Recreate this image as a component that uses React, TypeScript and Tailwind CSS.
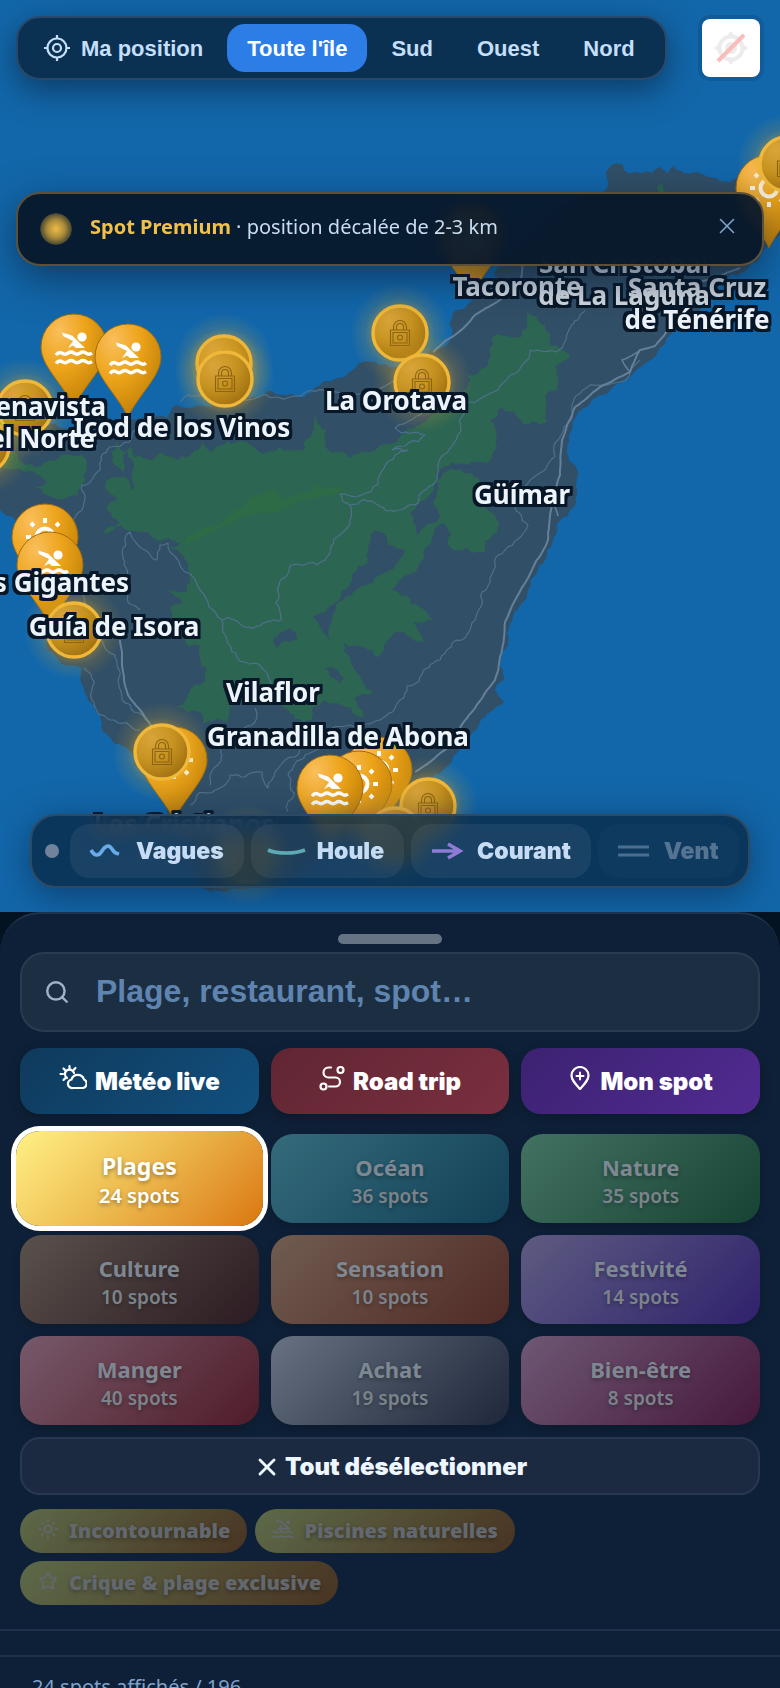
import type { ReactNode } from "react";
import { Plus, Search, Star, Sun, X } from "lucide-react";

type Point = [number, number];

/** Splits every segment again and again with a small repeatable offset, for coasts and roads. */
function rough(points: Point[], closed: boolean, amount: number): string {
  let seed = 7;
  const random = () => {
    seed = (seed * 16807) % 2147483647;
    return seed / 2147483647 - 0.5;
  };
  let list = closed ? [...points, points[0]] : points;
  for (let pass = 0; pass < 3; pass++) {
    const next: Point[] = [list[0]];
    for (let i = 1; i < list.length; i++) {
      const [ax, ay] = list[i - 1];
      const [bx, by] = list[i];
      const dx = bx - ax;
      const dy = by - ay;
      const shift = random() * amount;
      if (Math.hypot(dx, dy) > 5) next.push([(ax + bx) / 2 - dy * shift, (ay + by) / 2 + dx * shift]);
      next.push([bx, by]);
    }
    list = next;
  }
  return "M" + list.map(([x, y]) => `${x.toFixed(1)} ${y.toFixed(1)}`).join("L") + (closed ? "Z" : "");
}

const ISLAND: Point[] = [
  [-30, 430], [0, 428], [40, 424], [70, 428], [97, 417], [133, 420], [167, 418], [176, 405], [200, 406], [225, 400], [243, 400], [267, 391], [285, 395],
  [310, 393], [322, 383], [333, 380], [348, 373], [358, 364], [378, 364], [400, 367], [433, 350], [452, 337], [450, 322], [470, 303],
  [486, 290], [497, 267], [520, 240], [560, 205], [590, 192], [605, 191], [606, 173], [613, 164], [622, 164], [628, 173], [640, 173], [652, 173], [660, 167],
  [668, 173], [674, 165], [684, 173], [700, 173], [715, 178], [735, 179], [760, 175], [790, 170], [790, 225], [763, 250],
  [757, 262], [730, 275], [700, 310], [670, 335], [643, 365], [613, 387], [587, 407], [572, 430], [567, 453], [577, 480], [575, 505],
  [557, 525], [547, 550], [530, 580], [522, 603], [513, 617], [507, 633], [508, 645], [501, 660], [504, 680], [495, 690], [504, 702],
  [490, 712], [480, 722], [463, 747], [447, 767], [430, 785], [405, 805], [385, 830], [340, 845], [300, 870], [230, 889], [204, 889],
  [190, 850], [167, 813], [145, 773], [130, 752], [115, 744], [100, 715], [84, 690], [82, 668], [47, 650], [35, 600], [20, 560], [13, 517], [0, 510], [-30, 500],
];

const FORESTS: Point[][] = [
  [
    [116, 442], [112, 453], [117, 466], [123, 473], [128, 450], [131, 442], [134, 458], [140, 455], [150, 460], [160, 452], [178, 460], [200, 448], [203, 440], [212, 452], [220, 445], [250, 445],
    [290, 450], [305, 448], [312, 434], [313, 412], [320, 426], [326, 430], [331, 452], [350, 458], [380, 445], [407, 430], [430, 417], [446, 405], [460, 397], [467, 373], [488, 363],
    [493, 337], [520, 338], [527, 313], [545, 325], [550, 345], [570, 355], [555, 367], [558, 390], [545, 397], [547, 423], [523, 425],
    [500, 407], [490, 420], [497, 447], [487, 463], [450, 467], [470, 473], [484, 490], [495, 515], [497, 533], [485, 540], [483, 553], [450, 547],
    [443, 523], [425, 548], [403, 577], [390, 590], [420, 607], [433, 620], [413, 623], [423, 643], [398, 632], [387, 640], [378, 658],
    [363, 647], [343, 643], [350, 658], [357, 673], [373, 692], [353, 697], [363, 717], [337, 703], [313, 707], [312, 720], [303, 722], [290, 713], [277, 703], [250, 693], [230, 707],
    [227, 723], [203, 723], [200, 712], [177, 707], [190, 690], [203, 683], [207, 670], [200, 647], [180, 637], [197, 630], [173, 620], [170, 610], [183, 602], [167, 590],
    [187, 592], [190, 580], [168, 548], [180, 543], [157, 540], [140, 532], [103, 533], [120, 523], [107, 510], [117, 500], [105, 485], [120, 477], [133, 490], [132, 476], [134, 468],
  ],
  [[0, 450], [25, 465], [50, 460], [82, 455], [85, 480], [78, 497], [55, 498], [35, 487], [47, 482], [25, 472], [0, 468]],
  [[657, 188], [662, 184], [667, 192], [660, 193]],
];

const CLEARINGS: Point[][] = [
  [[373, 532], [380, 532], [405, 550], [398, 562], [390, 570], [373, 583], [358, 588], [343, 600], [332, 617], [330, 640], [322, 630], [313, 617], [328, 608], [343, 590], [367, 563]],
  [[437, 470], [470, 467], [437, 481], [433, 503], [440, 517], [418, 535], [410, 513], [425, 500], [434, 485]],
  [[290, 628], [297, 640], [277, 648], [273, 640]],
  [[325, 668], [345, 678], [340, 684]],
];

const RIDGE: Point[] = [[182, 548], [200, 530], [235, 510], [272, 488], [282, 500], [318, 484], [345, 490], [316, 498], [280, 512], [230, 525], [196, 540]];

const ROADS: Point[][] = [
  [[140, 425], [110, 447], [100, 470], [82, 485], [82, 510], [72, 540], [75, 580], [85, 600], [95, 620], [115, 655], [120, 675], [122, 700], [150, 722]],
  [[140, 610], [125, 590], [124, 565], [125, 538], [130, 532], [134, 540], [157, 560], [160, 545], [168, 543], [170, 552], [200, 590], [222, 620], [225, 635], [245, 662], [262, 668], [272, 685]],
  [[222, 620], [235, 620], [260, 626], [281, 620], [279, 585], [290, 566], [325, 560], [340, 535], [350, 520], [350, 505]],
  [[350, 505], [340, 494], [378, 484], [395, 455], [408, 450], [392, 450], [425, 435], [395, 428], [425, 405], [440, 395]],
  [[350, 505], [378, 505], [400, 510], [415, 505], [432, 485], [438, 465], [456, 440], [468, 402], [510, 375], [530, 350], [556, 352], [572, 325], [585, 310]],
  [[640, 360], [600, 385], [572, 405], [558, 440], [545, 470], [515, 505], [528, 525], [505, 550], [490, 578], [480, 608], [465, 638], [440, 660], [420, 677], [400, 700], [380, 720], [350, 725], [305, 755], [288, 775], [288, 812]],
  [[190, 805], [215, 790], [230, 775], [245, 777], [262, 772], [268, 788], [275, 772], [300, 750]],
  [[84, 668], [92, 700], [110, 720], [140, 730]],
  [[255, 708], [252, 725], [240, 735]],
  [[218, 745], [218, 765], [210, 785]],
  [[180, 402], [200, 395], [240, 400], [290, 397], [330, 393], [370, 390], [410, 375]],
];

const MOTORWAYS: Point[][] = [
  [[433, 352], [455, 335], [475, 315], [497, 302], [520, 285], [523, 262]],
  [[740, 268], [690, 285], [672, 325], [655, 346], [640, 350], [630, 372], [600, 387], [575, 407], [562, 440], [560, 475], [551, 510], [548, 540], [525, 583], [505, 622], [502, 650], [495, 680], [475, 708], [460, 728], [447, 748], [430, 762], [415, 772]],
  [[120, 640], [122, 665], [128, 695], [150, 724], [165, 745]],
];

const PALE_PATHS: Point[][] = [[[640, 350], [622, 360], [630, 372]], [[552, 502], [558, 516]]];

const LABELS: { text: string; x: number; y: number; anchor?: "end"; dim?: boolean }[] = [
  { text: "Tacoronte", x: 517, y: 296, dim: true },
  { text: "San Cristobal", x: 624, y: 273, dim: true },
  { text: "de La Laguna", x: 624, y: 305, dim: true },
  { text: "Santa Cruz", x: 697, y: 297, dim: true },
  { text: "de Ténérife", x: 697, y: 329 },
  { text: "La Orotava", x: 396, y: 410 },
  { text: "Icod de los Vinos", x: 182, y: 437 },
  { text: "Buenavista", x: 106, y: 416, anchor: "end" },
  { text: "del Norte", x: 95, y: 448, anchor: "end" },
  { text: "Los Gigantes", x: 129, y: 592, anchor: "end" },
  { text: "Guía de Isora", x: 114, y: 636 },
  { text: "Vilaflor", x: 273, y: 702 },
  { text: "Granadilla de Abona", x: 338, y: 746 },
  { text: "Los Cristianos", x: 184, y: 834 },
  { text: "Güímar", x: 522, y: 504 },
];

type MarkerProps = { kind: "swim" | "sun" | "lock"; x: number; y: number };

const MARKERS: MarkerProps[] = [
  { kind: "lock", x: -18, y: 446 },
  { kind: "lock", x: 25, y: 408 },
  { kind: "swim", x: 74, y: 347 },
  { kind: "swim", x: 128, y: 357 },
  { kind: "lock", x: 224, y: 363 },
  { kind: "lock", x: 225, y: 379 },
  { kind: "lock", x: 400, y: 333 },
  { kind: "lock", x: 422, y: 382 },
  { kind: "swim", x: 471, y: 236 },
  { kind: "sun", x: 769, y: 188 },
  { kind: "lock", x: 787, y: 164 },
  { kind: "sun", x: 45, y: 537 },
  { kind: "swim", x: 50, y: 565 },
  { kind: "lock", x: 74, y: 630 },
  { kind: "sun", x: 174, y: 760 },
  { kind: "lock", x: 162, y: 752 },
  { kind: "sun", x: 379, y: 770 },
  { kind: "sun", x: 359, y: 784 },
  { kind: "swim", x: 330, y: 788 },
  { kind: "lock", x: 428, y: 806 },
  { kind: "lock", x: 395, y: 835 },
  { kind: "lock", x: 247, y: 855 },
];

function Marker({ kind, x, y }: MarkerProps) {
  if (kind === "lock") {
    return (
      <g transform={`translate(${x} ${y})`}>
        <circle r="50" fill="url(#halo)" />
        <circle r="27" fill="url(#coin)" stroke="#efb83a" strokeWidth="3.4" />
        <g fill="none" stroke="#8c6413" strokeWidth="1.1">
          <path d="M-9.5 -3h19v15.500h-19zM-7 -.5h14v10.500h-14z" />
          <path d="M-6.5 -3v-3a6.500 6.500 0 0 1 13 0v3M-3.500 -3v-3a3.500 3.500 0 0 1 7 0v3" />
          <circle cy="4.5" r="2.5" />
        </g>
      </g>
    );
  }
  return (
    <g transform={`translate(${x} ${y})`}>
      <path
        d="M-33 0A33 33 0 1 1 33 0C33 19 12 36 0 60C-12 36 -33 19 -33 0Z"
        fill="url(#pin)"
        stroke="#a06c10"
        strokeWidth="1"
      />
      {kind === "swim" ? (
        <g>
          <path d="M-12 -14.5L-2 -11.500L11 1L2 1L-1 -1.500L-6 1L-1 -6L-11 -11Z" fill="#fff" />
          <circle cx="8" cy="-10" r="4.6" fill="#fff" />
          <path
            d="M-18 8q3 -4 6 -1.800t6 0t6 0t6 0t6 0t6 0M-18 16.500q3 -4 6 -1.800t6 0t6 0t6 0t6 0t6 0"
            fill="none"
            stroke="#fff"
            strokeWidth="3.4"
          />
        </g>
      ) : (
        <g stroke="#fff" strokeWidth="4" fill="none">
          <circle r="8.5" />
          <path d="M0 -19v5M0 14v5M-19 0h5M14 0h5M-14 -14l3 3M11 11l3 3M-14 14l3 -3M11 -11l3 -3" />
        </g>
      )}
    </g>
  );
}

function IslandMap() {
  return (
    <svg
      className="absolute inset-0 h-full w-full"
      viewBox="0 0 780 912"
      preserveAspectRatio="xMidYMid slice"
      role="img"
      aria-label="Carte de Tenerife"
    >
      <defs>
        <radialGradient id="pin" cx="0.28" cy="0.18" r="0.9">
          <stop offset="0" stopColor="#fabf5c" />
          <stop offset="0.45" stopColor="#eda41a" />
          <stop offset="1" stopColor="#bc7c04" />
        </radialGradient>
        <radialGradient id="coin" cx="0.3" cy="0.25" r="0.85">
          <stop offset="0" stopColor="#d9a53a" />
          <stop offset="0.5" stopColor="#c6921f" />
          <stop offset="1" stopColor="#9c6d10" />
        </radialGradient>
        <radialGradient id="halo">
          <stop offset="0.5" stopColor="#e0a829" stopOpacity="0.42" />
          <stop offset="0.7" stopColor="#e0a829" stopOpacity="0.16" />
          <stop offset="1" stopColor="#e0a829" stopOpacity="0" />
        </radialGradient>
        <filter id="outline" x="-5%" y="-5%" width="110%" height="110%" colorInterpolationFilters="sRGB">
          <feMorphology in="SourceAlpha" operator="dilate" radius="3" result="thick" />
          <feFlood floodColor="#071727" />
          <feComposite in2="thick" operator="in" result="edge" />
          <feMerge>
            <feMergeNode in="edge" />
            <feMergeNode in="SourceGraphic" />
          </feMerge>
        </filter>
      </defs>
      <rect width="780" height="912" fill="#1267aa" />
      <path d={rough(ISLAND, true, 0.35)} fill="#314f66" />
      {FORESTS.map((area, i) => (
        <path key={i} d={rough(area, true, 0.45)} fill="#2d6553" />
      ))}
      {CLEARINGS.map((area, i) => (
        <path key={i} d={rough(area, true, 0.4)} fill="#314f66" />
      ))}
      <path d={rough(RIDGE, true, 0.3)} fill="#2c6b46" />
      <g fill="none" strokeLinejoin="round">
        {ROADS.map((road, i) => (
          <path key={i} d={rough(road, false, 0.4)} stroke="#4f708a" strokeWidth="1.2" />
        ))}
        {MOTORWAYS.map((road, i) => (
          <path key={i} d={rough(road, false, 0.08)} stroke="#66809a" strokeWidth="2" />
        ))}
        {PALE_PATHS.map((road, i) => (
          <path key={i} d={rough(road, false, 0.1)} stroke="#66809a" strokeWidth="1.5" />
        ))}
      </g>
      {MARKERS.map((marker, i) => (
        <Marker key={i} {...marker} />
      ))}
      <g className="font-['Noto_Sans',sans-serif] text-[26px] font-bold" filter="url(#outline)">
        {LABELS.map((label) => (
          <text key={label.text} x={label.x} y={label.y} textAnchor={label.anchor ?? "middle"} fill={label.dim ? "#d3dae2" : "#edf4fc"}>
            {label.text}
          </text>
        ))}
      </g>
    </svg>
  );
}

function TargetIcon() {
  return (
    <svg className="size-[26px]" viewBox="0 0 26 26" fill="none" stroke="currentColor" strokeWidth="2.2" aria-hidden="true">
      <circle cx="13" cy="13" r="9.5" />
      <circle cx="13" cy="13" r="4" />
      <path d="M13 0v4M13 22v4M0 13h4M22 13h4" />
    </svg>
  );
}

function LocateOffIcon() {
  return (
    <svg className="size-[36px]" viewBox="0 0 36 36" fill="none" aria-hidden="true">
      <circle cx="18" cy="18" r="11.5" stroke="#ececec" strokeWidth="4" />
      <circle cx="18" cy="18" r="6" fill="#ececec" />
      <path d="M18 1l4 5h-8zM18 35l4 -5h-8zM1 18l5 -4v8zM35 18l-5 -4v8z" fill="#ececec" />
      <path d="M5 31L31 5" stroke="#fbbcbc" strokeWidth="4" />
    </svg>
  );
}

const REGIONS = ["Toute l'île", "Sud", "Ouest", "Nord"];

function TopBar() {
  return (
    <header className="relative flex items-center justify-between pt-4 pr-5 pl-4">
      <nav className="flex h-16 items-center gap-1 rounded-[24px] border-2 border-[#29486a] bg-[#0b3152] pr-2.5 pl-1.5 font-['Liberation_Sans',Arial,sans-serif] text-[22px] font-bold text-[#c5dffa] shadow-[0_10px_32px_rgba(10,30,55,0.6)]">
        <button className="flex h-12 items-center gap-[11px] rounded-[18px] px-5">
          <TargetIcon />
          Ma position
        </button>
        {REGIONS.map((region, i) => (
          <button
            key={region}
            aria-pressed={i === 0}
            className={i === 0 ? "h-12 rounded-[18px] bg-[#2d7de6] px-5 text-white" : "h-12 rounded-[18px] px-5"}
          >
            {region}
          </button>
        ))}
      </nav>
      <button
        aria-label="Géolocalisation indisponible"
        className="flex size-[58px] items-center justify-center rounded-lg bg-white shadow-[0_0_0_4px_rgba(10,40,80,0.18)]"
      >
        <LocateOffIcon />
      </button>
    </header>
  );
}

function PremiumNotice() {
  return (
    <div
      role="status"
      className="relative mx-4 mt-28 flex h-[74px] items-center rounded-[24px] border-2 border-[#5c5138] bg-[#07172a]/95 px-[22px] font-['Noto_Sans',sans-serif] text-[20px] text-[#c9dcf0] shadow-[0_12px_40px_rgba(10,30,55,0.6)] backdrop-blur-[6px]"
    >
      <span className="size-8 rounded-full bg-[radial-gradient(circle,#ecbb46_0%,#a98a3b_40%,#4c4a32_68%,transparent_72%)]" />
      <p className="ml-[18px] flex-1 pb-1">
        <strong className="font-bold text-[#f1c04a]">Spot Premium</strong> · position décalée de 2-3 km
      </p>
      <button aria-label="Fermer" className="pb-1.5 text-[#7fa5cd]">
        <X size={26} strokeWidth={1.5} />
      </button>
    </div>
  );
}

const LAYERS: { name: string; icon: ReactNode; off?: boolean }[] = [
  { name: "Vagues", icon: <path d="M1 10c4 7 8 6 11 1s7-7 10-2 4 4 7 5" stroke="#68abe8" strokeWidth="3.6" /> },
  { name: "Houle", icon: <path d="M-3 10C6 14 24 14 34 10" stroke="#5eaab4" strokeWidth="3.6" /> },
  { name: "Courant", icon: <path d="M1 11h27M17 4l12 7-12 7" stroke="#8f7ad8" strokeWidth="3.6" /> },
  { name: "Vent", icon: <path d="M0 7h31M0 15h31" stroke="#4a6e8f" strokeWidth="3" />, off: true },
];

function LayerBar() {
  return (
    <div className="relative mx-[30px] mt-auto mb-6 flex h-[74px] items-center gap-[7px] rounded-[26px] border-2 border-[#2e4a63] bg-[#0a2c4b]/82 pr-[7px] pl-[13px] font-['Inter',sans-serif] text-[23px] font-black text-[#c6dcf4] shadow-[0_8px_36px_rgba(10,40,75,0.6)] backdrop-blur-[8px]">
      <span className="mr-[4px] size-[14px] shrink-0 rounded-full bg-[#71839b]" />
      {LAYERS.map((layer) => (
        <button
          key={layer.name}
          aria-pressed={!layer.off}
          className={
            layer.off
              ? "flex h-[54px] items-center gap-4 rounded-[20px] bg-white/2 px-5 text-[#557492]"
              : "flex h-[54px] items-center gap-4 rounded-[20px] bg-white/6 px-5"
          }
        >
          <svg className="h-[22px] w-[30px] overflow-visible" viewBox="0 0 30 22" fill="none" aria-hidden="true">
            {layer.icon}
          </svg>
          {layer.name}
        </button>
      ))}
    </div>
  );
}

function WeatherIcon() {
  return (
    <svg className="size-7" viewBox="0 0 28 28" fill="none" stroke="currentColor" strokeWidth="2.2" strokeLinecap="round" aria-hidden="true">
      <path d="M14 24h10a4.500 4.500 0 0 0 1 -8.500a6.500 6.500 0 0 0 -12.500 0a4.300 4.300 0 0 0 1.500 8.500z" />
      <path d="M8 14a4.600 4.600 0 1 1 7 -5" />
      <path d="M10.500 2v2.500M1.500 10h2.500M4.500 4.500l1.600 1.600M16.500 4l-1.600 1.600M4.500 16l1.600 -1.600" />
    </svg>
  );
}

function RouteIcon() {
  return (
    <svg className="size-[26px]" viewBox="0 0 26 26" fill="none" stroke="currentColor" strokeWidth="2.2" strokeLinecap="round" aria-hidden="true">
      <circle cx="21.500" cy="5" r="3" />
      <circle cx="4.500" cy="21.500" r="3" />
      <path d="M12 2.500H9.500a5 5 0 0 0 0 10h7a4.500 4.500 0 0 1 0 9H10" />
    </svg>
  );
}

function PinPlusIcon() {
  return (
    <span className="relative flex size-6 items-center justify-center">
      <svg className="absolute inset-0" viewBox="0 0 24 24" fill="none" stroke="currentColor" strokeWidth="2.2" aria-hidden="true">
        <path d="M12 23C7 17.500 3.500 14 3.500 9.500a8.500 8.500 0 0 1 17 0C20.500 14 17 17.500 12 23z" />
      </svg>
      <Plus className="relative mb-1" size={12} strokeWidth={4} />
    </span>
  );
}

function SwimIcon() {
  return (
    <svg className="size-[22px]" viewBox="-19 -17 38 36" aria-hidden="true">
      <path d="M-12 -14L-2 -11L10 0L-7 1L-1 -6" fill="none" stroke="currentColor" strokeWidth="3" />
      <circle cx="9" cy="-11" r="3" fill="currentColor" />
      <path d="M-18 8q3 -4 6 -1.800t6 0t6 0t6 0t6 0t6 0M-18 16q3 -4 6 -1.800t6 0t6 0t6 0t6 0t6 0" fill="none" stroke="currentColor" strokeWidth="2.6" />
    </svg>
  );
}

const ACTIONS = [
  { name: "Météo live", icon: <WeatherIcon />, fill: "from-[#0f3a5c] to-[#11507f]" },
  { name: "Road trip", icon: <RouteIcon />, fill: "from-[#612633] to-[#7a2f40]" },
  { name: "Mon spot", icon: <PinPlusIcon />, fill: "from-[#3c2272] to-[#512b91]" },
];

const CATEGORIES = [
  { name: "Océan", count: 36, fill: "from-[#346b7b] to-[#124056]" },
  { name: "Nature", count: 35, fill: "from-[#437262] to-[#174335]" },
  { name: "Culture", count: 10, fill: "from-[#5a514c] to-[#2c1c22]" },
  { name: "Sensation", count: 10, fill: "from-[#705c50] to-[#502b26]" },
  { name: "Festivité", count: 14, fill: "from-[#5e5b80] to-[#31206c]" },
  { name: "Manger", count: 40, fill: "from-[#76596b] to-[#4f1b29]" },
  { name: "Achat", count: 19, fill: "from-[#687282] to-[#1f283a]" },
  { name: "Bien-être", count: 8, fill: "from-[#6e5875] to-[#45183c]" },
];

const TAGS = [
  { name: "Incontournable", icon: <Sun size={22} strokeWidth={1.75} /> },
  { name: "Piscines naturelles", icon: <SwimIcon /> },
  { name: "Crique & plage exclusive", icon: <Star size={20} strokeWidth={2} /> },
];

function BottomSheet() {
  return (
    <div className="flex-1 bg-[#041322]">
      <section className="min-h-full rounded-t-[40px] border-t-2 border-[#1d334d] bg-[#0e2037] font-['Noto_Sans',sans-serif]">
        <div className="mx-auto mt-5 h-[10px] w-[104px] rounded-full bg-[#667382]" />
        <div className="flex flex-col px-5 pt-2">
          <label className="flex h-20 items-center gap-[26px] rounded-[24px] border-2 border-[#2a3b50] bg-[#1b2e42] px-[22px] text-[#9fb3c6]">
            <Search size={26} strokeWidth={2.25} className="shrink-0" />
            <input
              type="search"
              aria-label="Rechercher un lieu"
              placeholder="Plage, restaurant, spot…"
              className="min-w-0 flex-1 bg-transparent pb-0.5 font-['Liberation_Sans',Arial,sans-serif] text-[32px] font-bold text-white outline-none placeholder:text-[#5f84b0] placeholder:opacity-100"
            />
          </label>
          <div className="mt-4 grid grid-cols-3 gap-3 font-['Inter',sans-serif] text-[24px] font-black text-white">
            {ACTIONS.map((action) => (
              <button
                key={action.name}
                className={`flex h-[66px] items-center justify-center gap-2 rounded-[20px] bg-linear-135 pt-0.5 shadow-[0_4px_12px_rgba(0,0,0,0.2)] ${action.fill}`}
              >
                <span className="pb-2">{action.icon}</span>
                {action.name}
              </button>
            ))}
          </div>
          <div className="mt-5 grid grid-cols-3 gap-3">
            <button
              aria-pressed="true"
              className="relative -mx-1 -my-[3px] flex flex-col items-center justify-center rounded-[24px] bg-linear-135 from-[#fff185] via-[#ecb94d] to-[#d97706] pt-1 text-white ring-[5px] ring-white [text-shadow:0_2px_4px_rgba(0,0,0,0.35)]"
            >
              <span className="text-[23px] leading-[30px] font-bold">Plages</span>
              <span className="text-[20px] leading-[30px] font-semibold">24 spots</span>
            </button>
            {CATEGORIES.map((category) => (
              <button
                key={category.name}
                aria-pressed="false"
                className={`flex h-[89px] flex-col items-center justify-center rounded-[22px] bg-linear-135 pt-1 shadow-[0_4px_10px_rgba(0,0,0,0.16)] [text-shadow:0_2px_4px_rgba(0,0,0,0.3)] ${category.fill}`}
              >
                <span className="text-[22px] leading-[30px] font-bold text-[#7e8892]">{category.name}</span>
                <span className="text-[19px] leading-[28px] font-semibold text-[#7b838a]">{category.count} spots</span>
              </button>
            ))}
          </div>
          <button className="mt-3 flex h-[58px] items-center justify-center gap-1 rounded-[20px] border-2 border-[#28384e] bg-[#1b2a41] pt-0.5 font-['Inter',sans-serif] text-[24px] font-black text-[#eef6ff]">
            <X size={28} strokeWidth={2.5} />
            Tout désélectionner
          </button>
          <div className="mt-3.5 flex flex-wrap gap-2 pr-[200px]">
            {TAGS.map((tag) => (
              <button
                key={tag.name}
                className="flex h-11 items-center gap-2.5 rounded-full bg-linear-135 from-[#5c6a49] to-[#483422] px-[17px] text-[20px] font-black text-[#62686d] [text-shadow:0_2px_4px_rgba(0,0,0,0.3)]"
              >
                <span className="flex w-[22px] justify-center pb-1">{tag.icon}</span>
                {tag.name}
              </button>
            ))}
          </div>
        </div>
        <div className="mt-6 h-7 border-y-2 border-[#1f324b]" />
        <p className="px-8 pt-4 text-[20px] leading-7 text-[#7fa3cb]">24 spots affichés / 196</p>
      </section>
    </div>
  );
}

export default function App() {
  return (
    <main className="flex h-screen flex-col overflow-hidden bg-[#041322]">
      <section className="relative flex h-[912px] shrink-0 flex-col overflow-hidden">
        <IslandMap />
        <TopBar />
        <PremiumNotice />
        <LayerBar />
      </section>
      <BottomSheet />
    </main>
  );
}
